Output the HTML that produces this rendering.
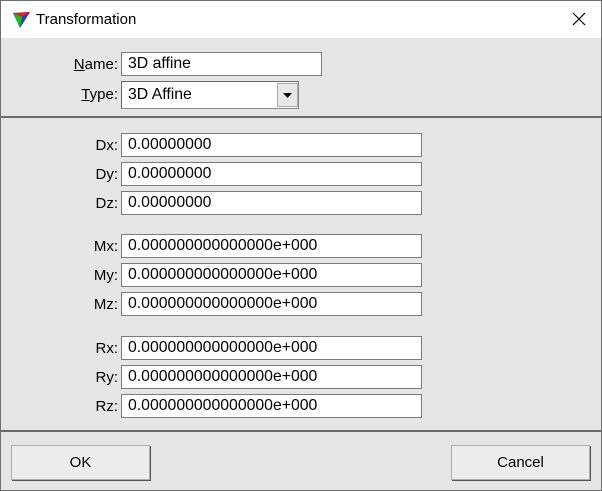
<!DOCTYPE html>
<html><head><style>
body{margin:0;width:602px;height:491px;overflow:hidden;font-family:"Liberation Sans",sans-serif;font-size:15px;color:#000;}
.win{position:absolute;left:0;top:0;width:600px;height:489px;border:1px solid #6e6e6e;background:#e6e6e6;}
.title{position:absolute;left:0;top:0;width:600px;height:37px;background:#fff;}
.title span{position:absolute;left:35px;top:10px;font-size:15px;}
.x{position:absolute;left:569px;top:9px;}
.sep{position:absolute;left:0;width:600px;height:2px;background:#6a6a6a;}
.lbl{position:absolute;width:117px;text-align:right;font-size:15px;}
.in{position:absolute;left:120px;height:22px;background:#fff;border:1px solid #7a7a7a;box-sizing:content-box;padding-left:6px;line-height:22px;font-size:15.8px;}
.btn{position:absolute;top:444px;width:137px;height:33px;border:1px solid #adadad;background:#ededed;text-align:center;line-height:33px;font-size:15px;box-shadow:1px 1px 0 #555;}
</style></head><body>
<div class="win">
<div class="title">
<svg style="position:absolute;left:11px;top:9px" width="20" height="20" viewBox="0 0 20 20"><polygon points="1,3 18,2 8,18" fill="#1a3cd8"/><polygon points="1,3 10,7 8,18" fill="#17c017"/><polygon points="1,3 18,2 10,7" fill="#e0201c"/></svg>
<span>Transformation</span>
<svg class="x" width="18" height="18" viewBox="0 0 18 18"><path d="M3 3L15 15M15 3L3 15" stroke="#000" stroke-width="1.2"/></svg>
</div>
<div class="lbl" style="top:55px"><u>N</u>ame:</div>
<div class="in" style="top:51px;width:193px">3D affine</div>
<div class="lbl" style="top:85px"><u>T</u>ype:</div>
<div style="position:absolute;left:120px;top:80px;width:176px;height:26px;background:#fff;border:1px solid #888;border-top-color:#666;border-left-color:#666"><span style="position:absolute;left:6px;top:4px;font-size:15.8px">3D Affine</span>
<div style="position:absolute;left:155px;top:1px;width:19px;height:22px;background:#e8e8e8;border:1px solid #aaa"><svg width="19" height="22"><polygon points="5,9 14,9 9.5,14" fill="#000"/></svg></div></div>
<div class="sep" style="top:115px"></div>
<div class="lbl" style="top:136px">Dx:</div><div class="in" style="top:132px;width:293px">0.00000000</div>
<div class="lbl" style="top:165px">Dy:</div><div class="in" style="top:161px;width:293px">0.00000000</div>
<div class="lbl" style="top:194px">Dz:</div><div class="in" style="top:190px;width:293px">0.00000000</div>
<div class="lbl" style="top:237px">Mx:</div><div class="in" style="top:233px;width:293px">0.000000000000000e+000</div>
<div class="lbl" style="top:266px">My:</div><div class="in" style="top:262px;width:293px">0.000000000000000e+000</div>
<div class="lbl" style="top:295px">Mz:</div><div class="in" style="top:291px;width:293px">0.000000000000000e+000</div>
<div class="lbl" style="top:339px">Rx:</div><div class="in" style="top:335px;width:293px">0.000000000000000e+000</div>
<div class="lbl" style="top:368px">Ry:</div><div class="in" style="top:364px;width:293px">0.000000000000000e+000</div>
<div class="lbl" style="top:397px">Rz:</div><div class="in" style="top:393px;width:293px">0.000000000000000e+000</div>
<div class="sep" style="top:429px"></div>
<div class="btn" style="left:10px">OK</div>
<div class="btn" style="left:450px">Cancel</div>
</div>
</body></html>
